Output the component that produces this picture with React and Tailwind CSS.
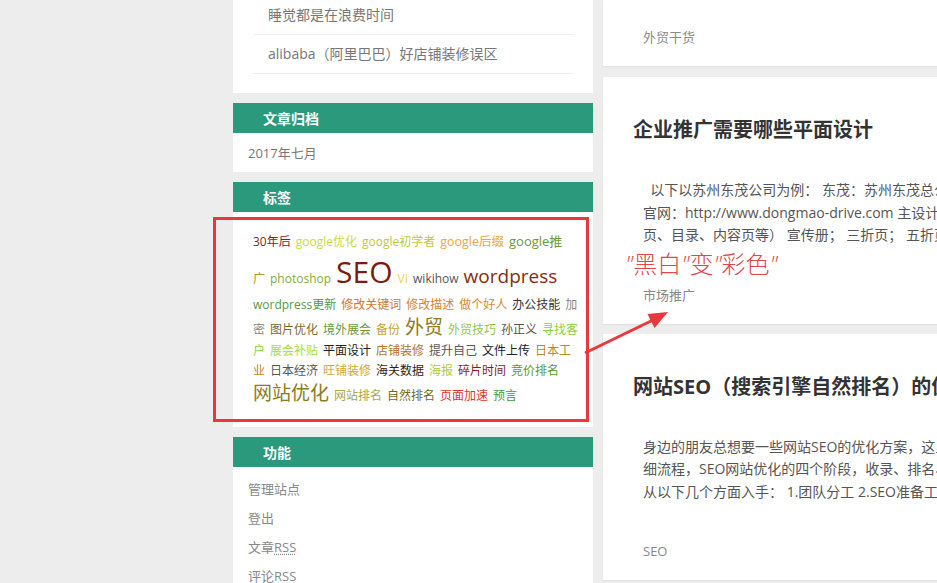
import React from 'react';

const FONT = "font-[family-name:Open_Sans,Noto_Sans_CJK_SC,sans-serif]";

// tag cloud, one array per visual line
const tagRows = [
    {
        cls: 'h-[21px]',
        tags: [
            ['30年后', 'text-[#8b1a1a]'],
            ['google优化', 'text-[#c6dd3c]'],
            ['google初学者', 'text-[#bfc83a]'],
            ['google后缀', 'text-[#eba545] text-[12.5px]'],
            ['google推', 'text-[#6d9b2f] text-[13px]'],
        ],
    },
    {
        cls: 'h-[42px] pt-[5px]',
        tags: [
            ['广', 'text-[#9f9a2f]'],
            ['photoshop', 'text-[#87ad45]'],
            ['SEO', 'text-[#7b1c0c] text-[30px] leading-[30px]'],
            ['VI', 'text-[#ecd35a]'],
            ['wikihow', 'text-[#555555]'],
            ['wordpress', 'text-[#8a2a0c] text-[19px] leading-[19px]'],
        ],
    },
    {
        cls: 'h-[21px]',
        tags: [
            ['wordpress更新', 'text-[#4f9a47]'],
            ['修改关键词', 'text-[#d2772f]'],
            ['修改描述', 'text-[#d6852f]'],
            ['做个好人', 'text-[#d88838]'],
            ['办公技能', 'text-[#333333]'],
            ['加', 'text-[#888888]'],
        ],
    },
    {
        cls: 'h-[25px] pt-[2px]',
        tags: [
            ['密', 'text-[#888888]'],
            ['图片优化', 'text-[#7a6c34]'],
            ['境外展会', 'text-[#6b9a3c]'],
            ['备份', 'text-[#c4a233]'],
            ['外贸', 'text-[#8b7b22] text-[19px] leading-[19px]'],
            ['外贸技巧', 'text-[#93c453]'],
            ['孙正义', 'text-[#555555]'],
            ['寻找客', 'text-[#8cd141]'],
        ],
    },
    {
        cls: 'h-[20px]',
        tags: [
            ['户', 'text-[#8cd141]'],
            ['展会补贴', 'text-[#a5e13f]'],
            ['平面设计', 'text-[#222222]'],
            ['店铺装修', 'text-[#b57526]'],
            ['提升自己', 'text-[#555555]'],
            ['文件上传', 'text-[#222222]'],
            ['日本工', 'text-[#c2852a]'],
        ],
    },
    {
        cls: 'h-[20px]',
        tags: [
            ['业', 'text-[#c2852a]'],
            ['日本经济', 'text-[#555555]'],
            ['旺铺装修', 'text-[#d4a83a]'],
            ['海关数据', 'text-[#3a1c0c]'],
            ['海报', 'text-[#b6c646]'],
            ['碎片时间', 'text-[#8b1a1a]'],
            ['竞价排名', 'text-[#5d9a2c]'],
        ],
    },
    {
        cls: 'h-[28px] pt-[3px]',
        tags: [
            ['网站优化', 'text-[#8b7b22] text-[19px] leading-[19px]'],
            ['网站排名', 'text-[#a4a746]'],
            ['自然排名', 'text-[#6e6a25]'],
            ['页面加速', 'text-[#e2351f]'],
            ['预言', 'text-[#3e9a3b]'],
        ],
    },
];

const WidgetTitle = ({ children }) => (
    <div className="h-[30px] bg-[#2a997c] text-white font-bold text-[14px] pl-[30px] flex items-center">
        {children}
    </div>
);

const PostCard = ({ title, lines, tag }) => (
    <div className="bg-white pt-[38px] pb-[19px] shadow-[0_1px_2px_rgba(0,0,0,0.06)]">
        <h2 className="pl-[30px] text-[20px] leading-[30px] font-bold text-[#333333] whitespace-nowrap">{title}</h2>
        <div className="mt-[34px] pl-[40px] text-[14px] leading-[22.5px] text-[#555555] whitespace-nowrap">
            {lines.map((l, i) => (
                <div key={i}>{l}</div>
            ))}
        </div>
        <div className="mt-[38px] pl-[40px] text-[13px] leading-[20px] text-[#888888]">{tag}</div>
    </div>
);

export default function App() {
    return (
        <div className={`relative w-[937px] h-[583px] overflow-hidden bg-[#ededed] flex items-start ${FONT}`}>
            {/* left gutter */}
            <div className="w-[233px] shrink-0" />

            {/* sidebar */}
            <div className="w-[360px] shrink-0 flex flex-col gap-[10px]">
                <div className="shrink-0 bg-white -mt-[18px] px-[20px] pb-[19px] text-[14px] leading-[22px] text-[#777777] whitespace-nowrap overflow-hidden">
                    <div className="pl-[15px] pb-[8px] border-b border-[#eeeeee]">
                        <div>我一直认为，人如果一天不能保证七八小时</div>
                        <div>睡觉都是在浪费时间</div>
                    </div>
                    <div className="pl-[15px] py-[8px] border-b border-[#eeeeee]">alibaba（阿里巴巴）好店铺装修误区</div>
                </div>

                <div className="shrink-0">
                    <WidgetTitle>文章归档</WidgetTitle>
                    <div className="bg-white pl-[15px] pt-[10px] pb-[9px] text-[13px] leading-[20px] text-[#777777]">2017年七月</div>
                </div>

                <div className="shrink-0">
                    <WidgetTitle>标签</WidgetTitle>
                    <div className="bg-white px-[20px] pt-[19px] pb-[19px] text-[12px]">
                        {tagRows.map((row, i) => (
                            <div key={i} className={`flex items-baseline gap-x-[5px] whitespace-nowrap ${row.cls}`}>
                                {row.tags.map(([t, c]) => (
                                    <span key={t} className={`leading-[21px] ${c}`}>{t}</span>
                                ))}
                            </div>
                        ))}
                    </div>
                </div>

                <div className="shrink-0">
                    <WidgetTitle>功能</WidgetTitle>
                    <div className="bg-white pl-[15px] pt-[8px] text-[13px] leading-[29px] text-[#888888]">
                        <div>管理站点</div>
                        <div>登出</div>
                        <div>文章<span className="underline decoration-dotted underline-offset-2">RSS</span></div>
                        <div>评论<span className="underline decoration-dotted underline-offset-2">RSS</span></div>
                    </div>
                </div>
            </div>

            {/* posts */}
            <div className="w-[700px] shrink-0 ml-[10px] flex flex-col">
                <div className="bg-white pt-[27px] pb-[19px] pl-[40px] text-[13px] leading-[20px] text-[#888888] shadow-[0_1px_2px_rgba(0,0,0,0.06)]">
                    外贸干货
                </div>
                <div className="mt-[11px]">
                    <PostCard
                        title="企业推广需要哪些平面设计"
                        lines={[
                            '\u00a0\u00a0以下以苏州东茂公司为例： 东茂：苏州东茂总公司是一家专业从事',
                            '官网：http://www.dongmao-drive.com 主设计内容：画册（封面、封底、扉',
                            '页、目录、内容页等） 宣传册； 三折页； 五折页； 海报； 易拉宝',
                        ]}
                        tag="市场推广"
                    />
                </div>
                <div className="mt-[10px]">
                    <PostCard
                        title="网站SEO（搜索引擎自然排名）的优化方案"
                        lines={[
                            '身边的朋友总想要一些网站SEO的优化方案，这里整理了一份详',
                            '细流程，SEO网站优化的四个阶段，收录、排名、流量、转化，',
                            '从以下几个方面入手： 1.团队分工 2.SEO准备工作 3.网站结构',
                        ]}
                        tag="SEO"
                    />
                </div>
            </div>

            {/* annotation overlay */}
            <div className="absolute left-[213px] top-[217px] w-[376px] h-[205px] border-[3px] border-[#e8383d]" />
            <div className="absolute left-[625px] top-[252px] text-[24px] leading-[24px] font-light text-[#e0474c] whitespace-nowrap">
                <span className="italic">"</span>黑白<span className="italic">"</span>变<span className="italic">"</span>彩色<span className="italic">"</span>
            </div>
            <svg className="absolute left-0 top-0" width="937" height="583" viewBox="0 0 937 583">
                <line x1="585" y1="353" x2="652" y2="320.5" stroke="#e8383d" strokeWidth="3" />
                <polygon points="668,312 647.5,314 654.5,328" fill="#e8383d" />
            </svg>
        </div>
    );
}
